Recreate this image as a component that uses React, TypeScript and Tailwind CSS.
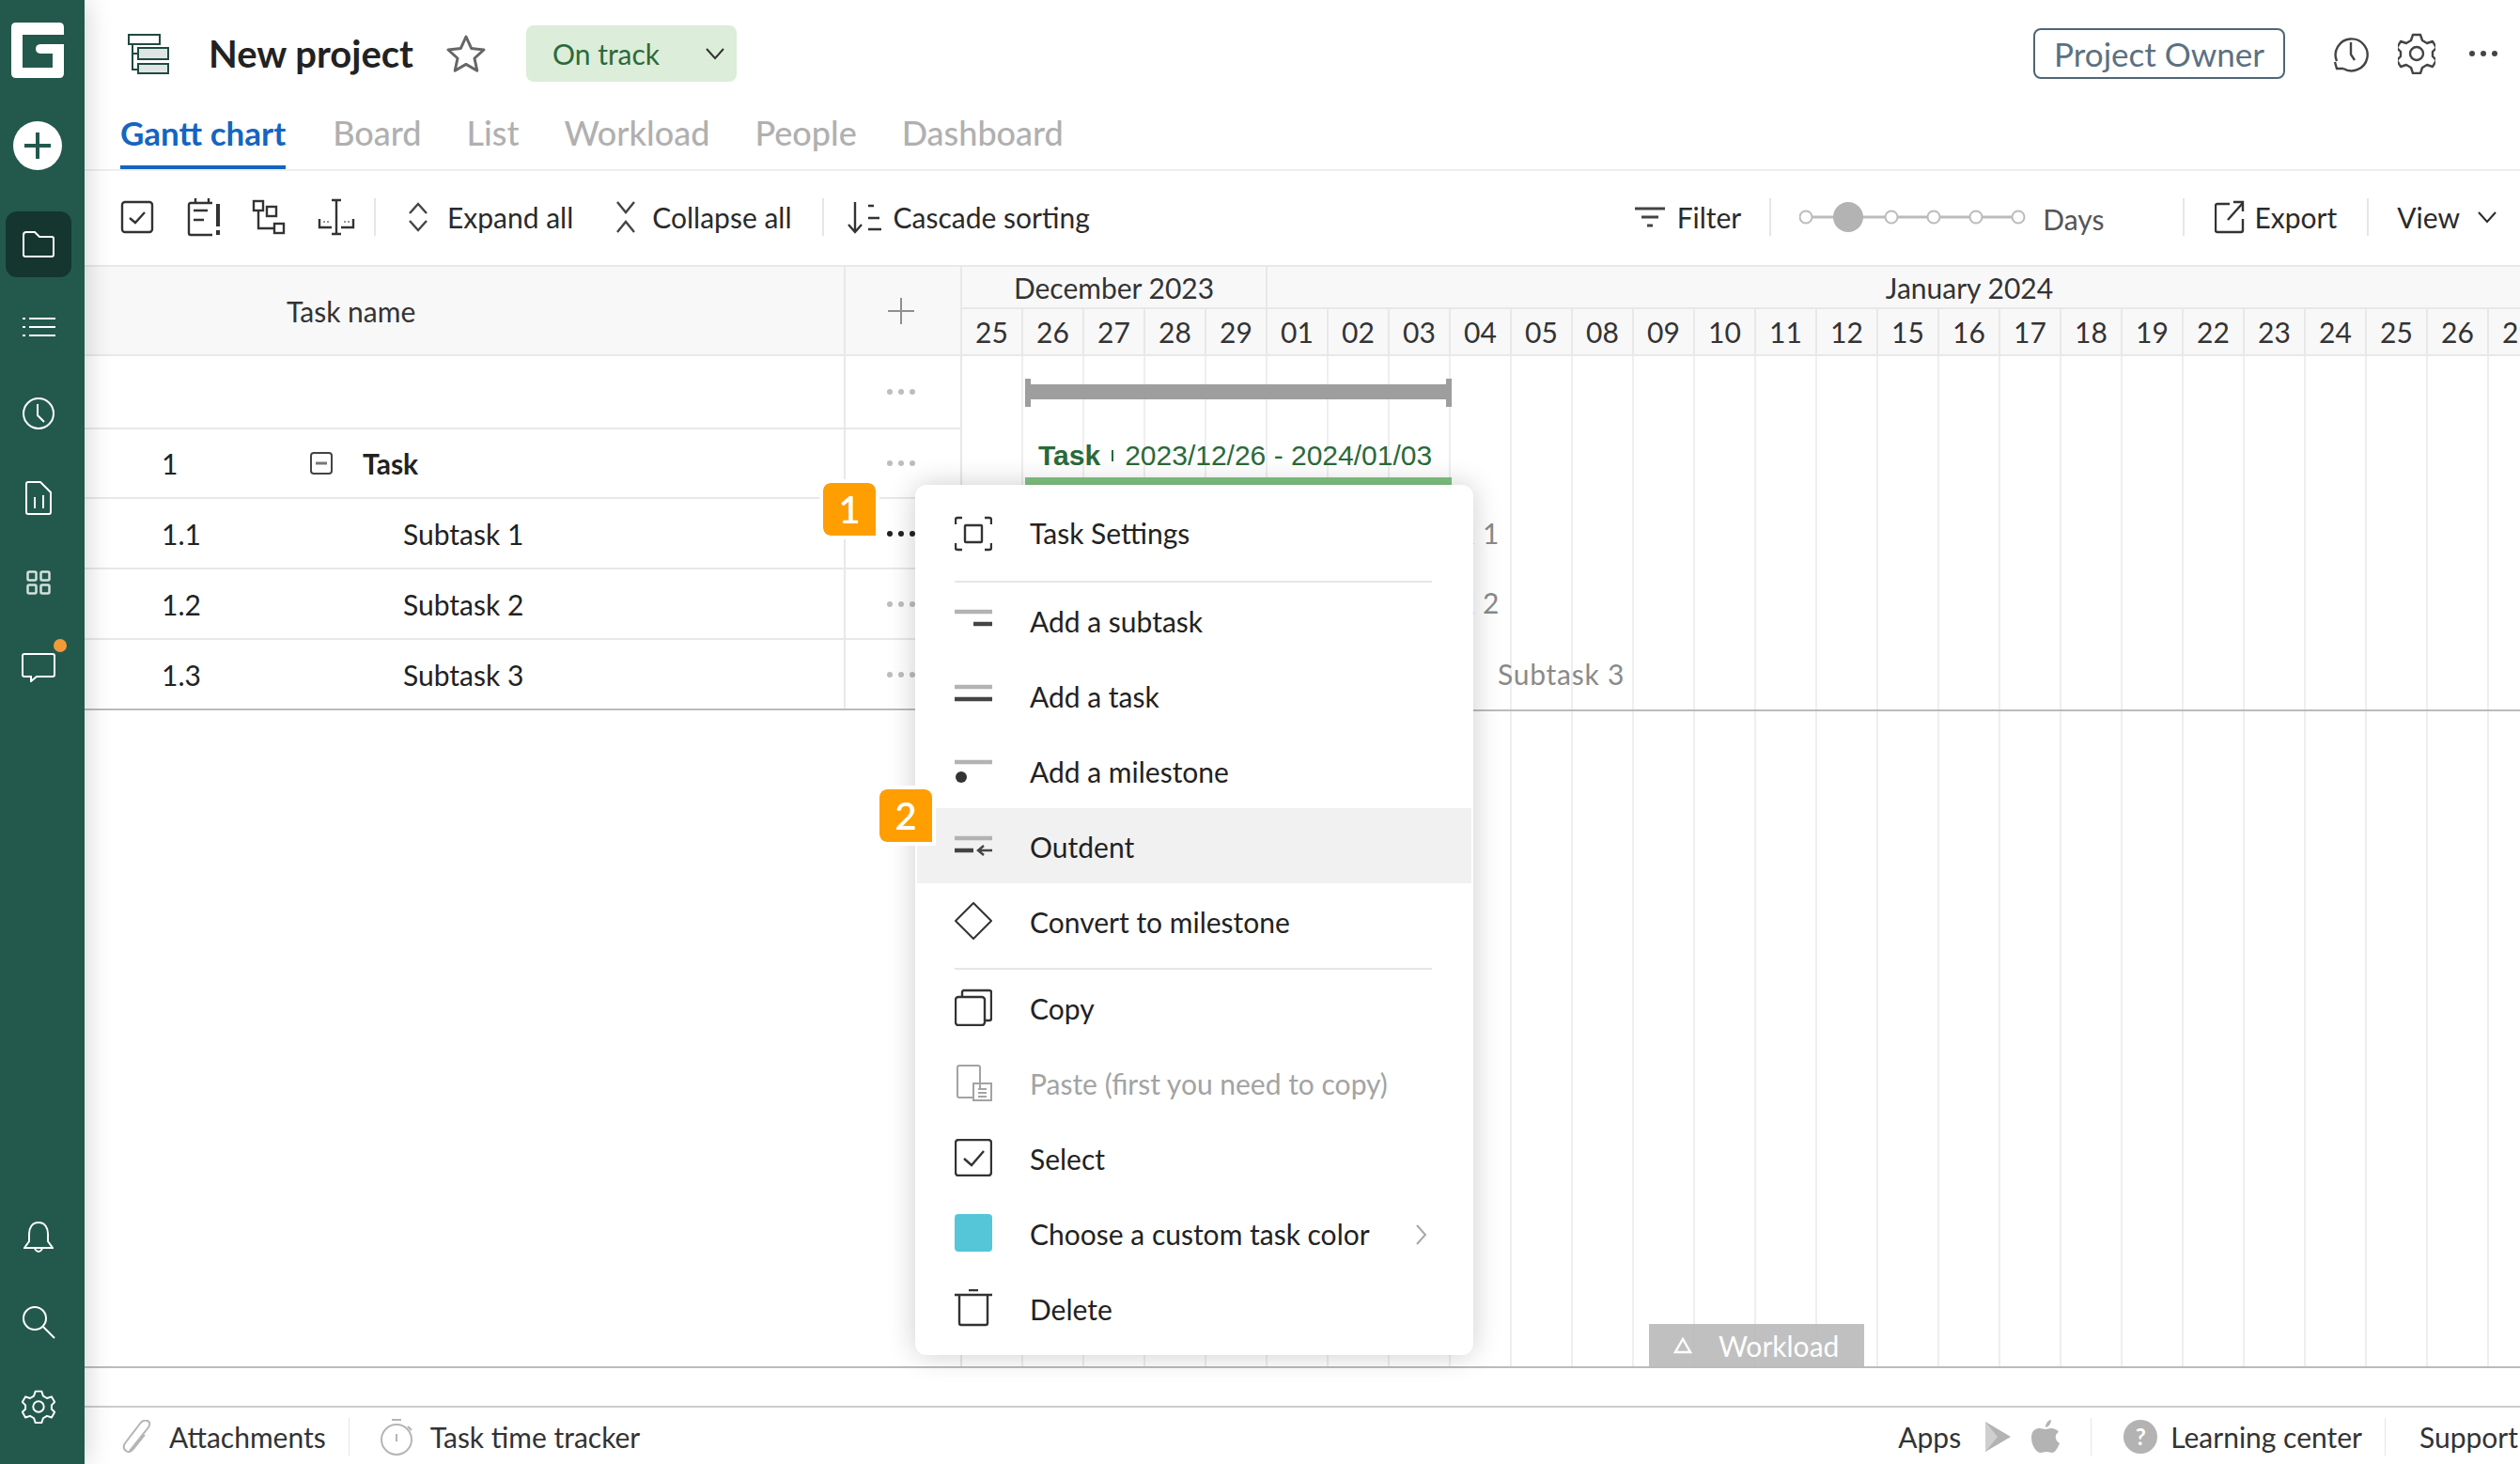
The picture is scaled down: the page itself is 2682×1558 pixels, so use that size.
import React from "react";

const Svg = ({ w = 40, h = 40, vb, className = "", children, sw = 2, stroke = "currentColor" }: any) => (
  <svg width={w} height={h} viewBox={vb ?? `0 0 ${w} ${h}`} fill="none" stroke={stroke} strokeWidth={sw} className={`shrink-0 ${className}`}>
    {children}
  </svg>
);

const Logo = () => (
  <svg width="56" height="59" viewBox="0 0 56 59" className="shrink-0">
    <path
      fill="#fff"
      fillRule="evenodd"
      d="M5 0H51Q56 0 56 5V13H12V48H44V33H32Q26 33 26 28Q26 23 32 23H56V54Q56 59 51 59H5Q0 59 0 54V5Q0 0 5 0Z"
    />
  </svg>
);

const Chevron = ({ className = "" }: any) => (
  <Svg w={22} h={14} className={className} sw={2}>
    <path d="M2 2l9 10 9-10" />
  </Svg>
);

const GearPath = () => (
  <>
    <path d="M16 2h8l2 6 5 3 6-2 4 7-4 4v5l4 4-4 7-6-2-5 3-2 6h-8l-2-6-5-3-6 2-4-7 4-4v-5l-4-4 4-7 6 2 5-3z" strokeLinejoin="round" />
    <circle cx="20" cy="22" r="7" />
  </>
);

const SideIcon = ({ children, active }: any) => (
  <div className={`size-17.5 mx-1.5 flex items-center justify-center rounded-xl relative ${active ? "bg-[#14362f]" : ""}`}>{children}</div>
);

const Sidebar = () => (
  <aside className="relative z-10 flex h-full w-[90px] shrink-0 flex-col bg-[#23594c] pt-6 pb-6.5 shadow-[0_0_30px_rgba(0,0,0,0.2)]">
    <div className="flex justify-center pr-2.5"><Logo /></div>
    <div className="mt-11.5 flex justify-center pr-2.5">
      <div className="flex size-13 items-center justify-center rounded-full bg-white">
        <Svg w={32} h={32} stroke="#23594c" sw={4}><path d="M16 2v28M2 16h28" /></Svg>
      </div>
    </div>
    <div className="mt-11 flex flex-col gap-5 text-white">
      <SideIcon active>
        <Svg w={36} h={30} sw={2}><path d="M2 5q0-3 3-3h9l5 5h13q2 0 2 2v17q0 2-2 2H4q-2 0-2-2z" /></Svg>
      </SideIcon>
      <SideIcon>
        <Svg w={36} h={22} sw={2} className="-mt-1">
          <path d="M8 2h28M8 11h28M8 20h28" />
          <path d="M1 2h3M1 11h3M1 20h3" />
        </Svg>
      </SideIcon>
      <SideIcon>
        <Svg w={36} h={36} sw={2}><circle cx="18" cy="18" r="16" /><path d="M17 8v12l7 7" /></Svg>
      </SideIcon>
      <SideIcon>
        <Svg w={30} h={38} sw={2}><path d="M2 4q0-2 2-2h13l11 11v21q0 2-2 2H4q-2 0-2-2z" /><path d="M11 18v12M20 16v14" /></Svg>
      </SideIcon>
      <SideIcon>
        <Svg w={26} h={26} sw={2.5} stroke="#d3dfdc">
          <rect x="1.5" y="1.5" width="9" height="9" rx="1.5" /><rect x="15.5" y="1.5" width="9" height="9" rx="1.5" />
          <rect x="1.5" y="15.5" width="9" height="9" rx="1.5" /><rect x="15.5" y="15.5" width="9" height="9" rx="1.5" />
        </Svg>
      </SideIcon>
      <SideIcon>
        <div className="relative">
          <Svg w={36} h={32} sw={2}><path d="M3 2h30q2 0 2 2v20q0 2-2 2H16l-6 5v-5H3q-2 0-2-2V4q0-2 2-2z" /></Svg>
          <span className="absolute -top-3.5 -right-3 size-3.5 rounded-full bg-[#f29a38]" />
        </div>
      </SideIcon>
    </div>
    <div className="mt-auto flex flex-col gap-5 text-white">
      <SideIcon>
        <Svg w={32} h={36} sw={2}><path d="M16 2c-7 0-10 6-10 12v8l-5 7h30l-5-7v-8c0-6-3-12-10-12zM12 30q4 6 8 0" /></Svg>
      </SideIcon>
      <SideIcon>
        <Svg w={36} h={36} sw={2}><circle cx="14" cy="14" r="12" /><path d="M23 23l12 12" /></Svg>
      </SideIcon>
      <SideIcon>
        <Svg w={36} h={36} vb="0 0 40 44" sw={2.4}><GearPath /></Svg>
      </SideIcon>
    </div>
  </aside>
);

const Vdiv = ({ className = "" }: any) => <div className={`h-10 w-0.5 shrink-0 bg-[#e6e6e6] ${className}`} />;

const Header = () => (
  <div className="flex h-29 shrink-0 items-center pb-0.5 pl-11.5 pr-6">
    <Svg w={44} h={44} stroke="#1f4a41" sw={2}>
      <rect x="1" y="2" width="33" height="10" fill="#fff" />
      <path d="M5 12v27h6M5 22h6" />
      <rect x="11" y="16" width="32" height="12" fill="#dfe5e3" />
      <rect x="11" y="33" width="32" height="10" fill="#dfe5e3" />
    </Svg>
    <span className="ml-10.5 text-[40px] font-bold text-[#222]">New project</span>
    <Svg w={44} h={42} stroke="#666" sw={3} className="ml-8.5">
      <path d="M22 3l5.6 12.4 13.4 1.6-10 9 2.8 13.2L22 32.4 10.200 39.200 13 26 3 17l13.400-1.600z" strokeLinejoin="round" />
    </Svg>
    <div className="ml-10.5 flex h-15 w-56 items-center justify-between rounded-lg bg-[#dcedda] pl-7 pr-3 text-3xl text-[#2b6a3a]">
      <span>On track</span>
      <Chevron className="text-[#333]" />
    </div>
    <div className="ml-auto flex h-13.5 items-center rounded-lg border-2 border-[#4e6675] px-5 text-[35px] text-[#5a7182]">Project Owner</div>
    <Svg w={40} h={44} stroke="#444" sw={2.4} className="ml-12.5">
      <path d="M12 38A17 17 0 1 0 5 30" /><path d="M3 31l2 7h7" /><path d="M20 10v13l4 6" />
    </Svg>
    <Svg w={40} h={44} stroke="#444" sw={2.4} className="ml-7.5"><GearPath /></Svg>
    <div className="ml-9 flex gap-1.5">
      {[0, 1, 2].map((i) => <span key={i} className="size-1.5 rounded-full bg-[#444]" />)}
    </div>
  </div>
);

const Tabs = () => (
  <div className="flex h-16.5 shrink-0 gap-12 border-b-2 border-[#eeeeee] pl-9.5 text-4xl font-medium text-[#b0b0b0]">
    <div className="mr-0.5 flex h-full items-center border-b-4 border-[#1565c0] pb-2.5 text-[35px] font-bold text-[#1565c0]">Gantt chart</div>
    {["Board", "List", "Workload", "People", "Dashboard"].map((t) => (
      <div key={t} className="flex items-center pb-3.5">{t}</div>
    ))}
  </div>
);

const Slider = () => (
  <svg width="245" height="36" viewBox="0 0 245 36" className="shrink-0" fill="#fff" stroke="#bbb" strokeWidth="2">
    <path d="M14 18H232" strokeWidth="3" />
    {[7, 98, 143, 188, 233].map((x) => <circle key={x} cx={x} cy="18" r="6.500" />)}
    <circle cx="52" cy="18" r="16" fill="#b3b3b3" stroke="none" />
  </svg>
);

const Toolbar = () => (
  <div className="flex h-25 shrink-0 items-center pb-0.5 pl-9.5 pr-6 text-3xl text-[#2a2a2a]">
    <Svg w={36} h={36} stroke="#333" sw={2.4}><rect x="2" y="2" width="32" height="32" rx="3" /><path d="M10 19l6 5 10-11" /></Svg>
    <Svg w={38} h={42} stroke="#333" sw={2.4} className="ml-8.5">
      <path d="M28 6H5q-2 0-2 2v30q0 2 2 2h23M3 17h0" /><path d="M10 1v6M24 1v6M8 14h15M8 24h11" />
      <path d="M34 7v24M34 35v5" strokeWidth="4" />
    </Svg>
    <Svg w={36} h={38} stroke="#333" sw={2.4} className="ml-8">
      <rect x="2" y="2" width="10" height="10" /><rect x="16" y="8" width="10" height="10" /><rect x="24" y="26" width="10" height="10" /><path d="M7 12v19h17" />
    </Svg>
    <Svg w={40} h={40} stroke="#333" sw={2.4} className="ml-8.5">
      <path d="M20 2v36M15 2h10M15 38h10" /><path d="M2 22v9h13M38 22v9H25" /><path d="M7 26v-2M11 26v-2M29 26v-2M33 26v-2" strokeWidth="1" />
    </Svg>
    <Vdiv className="ml-5" />
    <Svg w={22} h={34} stroke="#444" sw={2.4} className="ml-8.5"><path d="M2 13l9-10 9 10M2 21l9 10 9-10" /></Svg>
    <span className="ml-5">Expand all</span>
    <Svg w={24} h={36} stroke="#444" sw={2.4} className="ml-11"><path d="M3 2l9 11 9-11M3 34l9-11 9 11" /></Svg>
    <span className="ml-4">Collapse all</span>
    <Vdiv className="ml-8" />
    <Svg w={38} h={36} stroke="#333" sw={2.4} className="ml-6">
      <path d="M9 2v31M2 26l7 8 7-8" /><path d="M23 6h6M23 19h12M23 31h14" />
    </Svg>
    <span className="ml-3">Cascade sorting</span>
    <Svg w={34} h={24} stroke="#444" sw={3} className="ml-auto"><path d="M1 3h32M8 12h18M14 21h6" /></Svg>
    <span className="ml-3">Filter</span>
    <Vdiv className="ml-7.5" />
    <div className="ml-7.5"><Slider /></div>
    <span className="ml-3.5 mt-1 text-[#555]">Days</span>
    <Vdiv className="ml-21" />
    <Svg w={32} h={36} stroke="#333" sw={2.4} className="ml-8">
      <path d="M16 4H3q-2 0-2 2v26q0 2 2 2h25q2 0 2-2V20M14 21L30 3M20 2h10v10" />
    </Svg>
    <span className="ml-2.5">Export</span>
    <Vdiv className="ml-8" />
    <span className="ml-7.5">View</span>
    <Chevron className="ml-4.5" />
  </div>
);

const Dots = ({ dark }: { dark?: boolean }) => (
  <div className="flex gap-1.5 pr-1">
    {[0, 1, 2].map((i) => <span key={i} className={`size-1.5 rounded-full ${dark ? "bg-[#222]" : "bg-[#bdbdbd]"}`} />)}
  </div>
);

const rows = [
  { n: "1.1", t: "Subtask 1", dark: true },
  { n: "1.2", t: "Subtask 2" },
  { n: "1.3", t: "Subtask 3" },
];

const TableLeft = () => (
  <div className="flex w-[934px] shrink-0 flex-col border-r-2 border-[#e8e8e8]">
    <div className="flex h-[97px] shrink-0 items-center border-y-2 border-[#e8e8e8] bg-[#f8f8f8] text-3xl text-[#333]">
      <div className="w-[808px] pl-[215px]">Task name</div>
      <div className="flex h-full flex-1 items-center justify-center border-l-2 border-[#e8e8e8] pr-1">
        <Svg w={30} h={30} stroke="#8f8f8f" sw={2}><path d="M15 1v28M1 15h28" /></Svg>
      </div>
    </div>
    <div className="flex h-19.5 shrink-0 border-b-2 border-[#e8e8e8]">
      <div className="w-[808px]" />
      <div className="flex flex-1 items-center justify-center border-l-2 border-[#e8e8e8]"><Dots /></div>
    </div>
    <div className="flex h-18.5 shrink-0 border-b-2 border-[#e8e8e8] text-3xl text-[#222]">
      <div className="flex w-[808px] items-center">
        <span className="w-[240px] pl-[82px]">1</span>
        <Svg w={24} h={24} stroke="#444" sw={2}><rect x="1" y="1" width="22" height="22" rx="3" /><path d="M6 12h12" strokeWidth="3" stroke="#777" /></Svg>
        <span className="ml-8 font-bold">Task</span>
      </div>
      <div className="flex flex-1 items-center justify-center border-l-2 border-[#e8e8e8]"><Dots /></div>
    </div>
    {rows.map((r, i) => (
      <div key={r.n} className={`flex h-18.75 shrink-0 border-b-2 text-3xl text-[#222] ${i === 2 ? "border-[#bbbbbb]" : "border-[#e8e8e8]"}`}>
        <div className="flex w-[808px] items-center">
          <span className="w-[339px] pl-[82px]">{r.n}</span>
          <span>{r.t}</span>
        </div>
        <div className="flex flex-1 items-center justify-center border-l-2 border-[#e8e8e8]"><Dots dark={r.dark} /></div>
      </div>
    ))}
  </div>
);

const days = ["25","26","27","28","29","01","02","03","04","05","08","09","10","11","12","15","16","17","18","19","22","23","24","25","26","29"];

const Chart = () => (
  <div className="relative flex min-w-0 flex-1 flex-col overflow-hidden text-3xl text-[#333]">
    <div className="flex h-[97px] shrink-0 flex-col border-y-2 border-[#e8e8e8] bg-[#f8f8f8]">
      <div className="flex h-[45px] shrink-0 border-b-2 border-[#e8e8e8]">
        <div className="flex w-[325px] shrink-0 items-center justify-center border-r-2 border-[#e8e8e8]">December 2023</div>
        <div className="flex w-[1494px] shrink-0 items-center justify-center">January 2024</div>
      </div>
      <div className="grid flex-1 grid-cols-[repeat(26,65px)]">
        {days.map((d, i) => (
          <div key={i} className="flex items-center justify-center border-r-2 border-[#e8e8e8]">{d}</div>
        ))}
      </div>
    </div>
    <div className="grid flex-1 grid-cols-[repeat(26,65px)]">
      {days.map((d, i) => <div key={i} className="border-r-2 border-[#eeeeee]" />)}
    </div>
    <div className="absolute left-0 right-0 top-[473px] h-0.5 bg-[#bbbbbb]" />
    <div className="absolute left-[67px] top-[127px] h-4 w-[454px] bg-[#9e9e9e]" />
    <div className="absolute left-[67px] top-[121px] h-7.5 w-1.5 bg-[#9e9e9e]" />
    <div className="absolute left-[515px] top-[121px] h-7.5 w-1.5 bg-[#9e9e9e]" />
    <div className="absolute left-[81px] top-[185px] flex items-center whitespace-nowrap text-[#2a6a3a] [font-family:'Liberation_Sans',Arial,sans-serif]">
      <b>Task</b><span className="mx-3 h-3 w-0.5 bg-[#2a6a3a]" /><span>2023/12/26 - 2024/01/03</span>
    </div>
    <div className="absolute left-[67px] top-[226px] h-3 w-[454px] bg-[#7fc481]" />
    <span className="absolute left-[437px] top-[267px] tracking-wide text-[#8a8a8a]">Subtask 1</span>
    <span className="absolute left-[437px] top-[341px] tracking-wide text-[#8a8a8a]">Subtask 2</span>
    <span className="absolute left-[570px] top-[417px] tracking-wide text-[#8a8a8a]">Subtask 3</span>
    <div className="absolute bottom-0 left-[731px] flex h-[45px] w-[229px] items-center bg-[#b5b5b5]/85 text-white">
      <Svg w={20} h={18} stroke="#fff" sw={2.4} className="ml-6.5"><path d="M10 2L2 16h16z" /></Svg>
      <span className="ml-7">Workload</span>
    </div>
  </div>
);

const Gray = "#333";
const menuIcons: Record<string, React.ReactNode> = {
  settings: (
    <Svg stroke={Gray} sw={2.4}>
      <rect x="11" y="11" width="18" height="18" rx="1" />
      <path d="M1 10V5q0-2 2-2h5M39 10V5q0-2-2-2h-5M1 30v5q0 2 2 2h5M39 30v5q0 2-2 2h-5" />
    </Svg>
  ),
  subtask: <Svg sw={4.5}><path d="M0 11h40" stroke="#b3b3b3" /><path d="M20 24h20" stroke="#444" /></Svg>,
  task: <Svg sw={4.5}><path d="M0 11h40" stroke="#b3b3b3" /><path d="M0 24h40" stroke="#444" /></Svg>,
  milestone: <Svg sw={4.5}><path d="M0 11h40" stroke="#b3b3b3" /><circle cx="7" cy="27" r="6" fill="#333" stroke="none" /></Svg>,
  outdent: (
    <Svg sw={4.5}>
      <path d="M0 12h40" stroke="#b3b3b3" /><path d="M0 25h20" stroke="#444" />
      <path d="M25 25h15M31 20l-6 5 6 5" stroke="#444" strokeWidth="2.4" />
    </Svg>
  ),
  convert: <Svg stroke={Gray} sw={2}><path d="M20 1l19 19-19 19L1 20z" strokeLinejoin="round" /></Svg>,
  copy: (
    <Svg stroke={Gray} sw={2.4}>
      <rect x="1" y="9" width="31" height="30" rx="3" /><path d="M8 9V4q0-2 2-2h27q2 0 2 2v28q0 2-2 2h-5" />
    </Svg>
  ),
  paste: (
    <Svg stroke="#a3a3a3" sw={2}>
      <path d="M27 26V4q0-2-2-2H5Q3 2 3 4v30q0 2 2 2h14" />
      <rect x="20" y="21" width="19" height="18" /><path d="M25 27h9M25 31h9M25 35h9" />
    </Svg>
  ),
  select: <Svg stroke={Gray} sw={2.4}><rect x="1" y="1" width="38" height="38" rx="3" /><path d="M10 21l8 7 13-15" /></Svg>,
  color: <div className="size-10 shrink-0 rounded bg-[#54c6d8]" />,
  del: <Svg stroke={Gray} sw={2.4}><path d="M0 6h40M15 1h10" /><path d="M5 6v30q0 2 2 2h26q2 0 2-2V6" /></Svg>,
};

const Item = ({ icon, label, muted, active, arrow, up }: any) => (
  <div className={`flex h-20 items-center pl-10 text-3xl ${muted ? "text-[#a3a3a3]" : "text-[#222]"} ${active ? "bg-[#f1f1f1]" : ""}`}>
    {menuIcons[icon]}
    <span className={`ml-10 ${up ? "-mt-0.5" : "mt-0.5"}`}>{label}</span>
    {arrow && <Svg w={14} h={24} stroke="#a8a8a8" sw={2} className="ml-auto mr-11.5 mt-1"><path d="M2 2l9 10-9 10" /></Svg>}
  </div>
);

const Divider = () => <div className="ml-10 mr-10.5 mt-2.5 h-0.5 bg-[#e6e6e6]" />;

const Menu = () => (
  <div className="absolute left-[974px] top-[516px] z-20 w-[594px] rounded-xl bg-white px-0.5 pb-2.5 pt-3 shadow-[0_0_30px_rgba(0,0,0,0.2)]">
    <Item icon="settings" label="Task Settings" up />
    <Divider />
    <Item icon="subtask" label="Add a subtask" />
    <Item icon="task" label="Add a task" />
    <Item icon="milestone" label="Add a milestone" />
    <Item icon="outdent" label="Outdent" active />
    <Item icon="convert" label="Convert to milestone" />
    <Divider />
    <Item icon="copy" label="Copy" />
    <Item icon="paste" label="Paste (first you need to copy)" muted />
    <Item icon="select" label="Select" />
    <Item icon="color" label="Choose a custom task color" arrow />
    <Item icon="del" label="Delete" />
  </div>
);

const Badge = ({ n, className }: any) => (
  <div className={`absolute z-30 box-content flex size-14 items-center justify-center rounded-xl rounded-br-none border-4 border-white bg-[#ff9e00] text-[40px] font-semibold text-white ${className}`}
    style={{ backgroundClip: "padding-box" }}>{n}</div>
);

const Footer = () => (
  <div className="flex h-[62px] shrink-0 items-center border-t-2 border-[#cccccc] pl-10 pr-0.5 pt-0.5 text-3xl text-[#333]">
    <Svg w={32} h={36} stroke="#b5b5b5" sw={2}>
      <path d="M8 33L28 8q3-5-1-7t-8 3L3 25q-3 5 1 8t8-2L24 16" />
    </Svg>
    <span className="ml-4.5">Attachments</span>
    <Vdiv className="ml-6 w-px" />
    <Svg w={36} h={40} stroke="#b5b5b5" sw={2} className="ml-8">
      <circle cx="18" cy="23" r="16" /><path d="M13 2h10M18 17v8M30 9l4 4" />
    </Svg>
    <span className="ml-4.5">Task time tracker</span>
    <span className="ml-auto">Apps</span>
    <Svg w={30} h={34} stroke="none" className="ml-6"><path d="M2 1l27 16L2 33z" fill="#b3b3b3" /><path d="M2 1l13 16L2 33z" fill="#cfcfcf" /></Svg>
    <Svg w={32} h={38} stroke="none" className="ml-5">
      <path fill="#b3b3b3" d="M22 10c3 0 6 1 8 4-4 2-5 8 1 12-2 5-5 10-8 10-2 0-3-1-6-1s-4 1-6 1C6 36 1 28 1 20c0-7 4-10 9-10 2 0 4 1 6 1s3-1 6-1zM22 1c0 4-3 8-6 8 0-4 3-8 6-8z" />
    </Svg>
    <Vdiv className="ml-8 w-px" />
    <div className="ml-8.5 flex size-9 shrink-0 items-center justify-center rounded-full bg-[#b3b3b3] text-2xl font-bold text-white">?</div>
    <span className="ml-3.5">Learning center</span>
    <Vdiv className="ml-6 w-px" />
    <span className="ml-9">Support</span>
  </div>
);

export default function App() {
  return (
    <div className="relative flex h-screen w-full overflow-hidden bg-white font-['Lato',sans-serif]">
      <Sidebar />
      <div className="flex min-w-0 flex-1 flex-col">
        <Header />
        <Tabs />
        <Toolbar />
        <div className="flex min-h-0 flex-1">
          <TableLeft />
          <Chart />
        </div>
        <div className="h-10.5 shrink-0 border-t-2 border-[#bbbbbb]" />
        <Footer />
      </div>
      <Menu />
      <Badge n="1" className="left-[872px] top-[510px]" />
      <Badge n="2" className="left-[932px] top-[836px]" />
    </div>
  );
}
